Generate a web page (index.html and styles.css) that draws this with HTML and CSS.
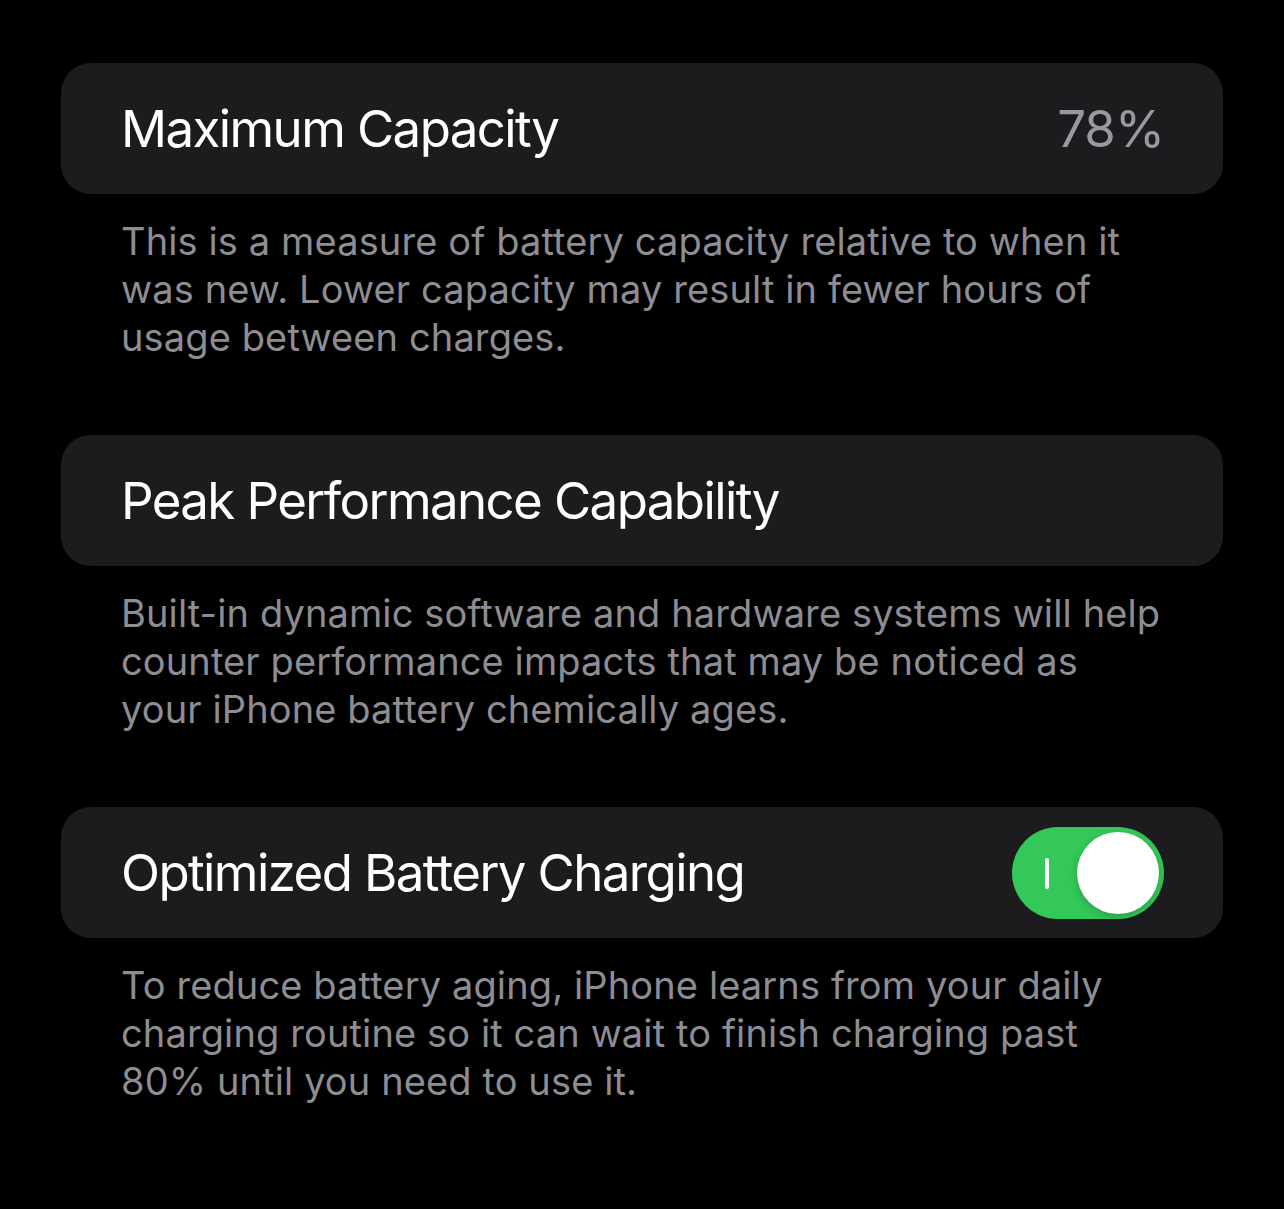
FILE: index.html
```html
<!DOCTYPE html>
<html>
<head>
<meta charset="utf-8">
<link rel="stylesheet" href="styles.css">
</head>
<body>
<main class="page">
  <section class="group">
    <div class="card">
      <span class="title">Maximum Capacity</span>
      <span class="value">78%</span>
    </div>
    <p class="footer">This is a measure of battery capacity relative to when it was new. Lower capacity may result in fewer hours of usage between charges.</p>
  </section>
  <section class="group">
    <div class="card">
      <span class="title">Peak Performance Capability</span>
    </div>
    <p class="footer">Built-in dynamic software and hardware systems will help counter performance impacts that may be noticed as your iPhone battery chemically ages.</p>
  </section>
  <section class="group">
    <div class="card">
      <span class="title">Optimized Battery Charging</span>
      <span class="toggle"><span class="on-mark"></span><span class="knob"></span></span>
    </div>
    <p class="footer">To reduce battery aging, iPhone learns from your daily charging routine so it can wait to finish charging past 80% until you need to use it.</p>
  </section>
</main>
</body>
</html>
```
FILE: styles.css
```css
html, body {
  margin: 0;
  padding: 0;
  background: #000;
}
body {
  font-family: Inter, "Noto Sans", sans-serif;
  -webkit-font-smoothing: antialiased;
}
.page {
  padding: 63px 61px 0 61px;
  display: flex;
  flex-direction: column;
}
.group {
  display: flex;
  flex-direction: column;
}
.card {
  height: 131px;
  background: #1c1c1e;
  border-radius: 30px;
  display: flex;
  align-items: center;
  justify-content: space-between;
  padding: 0 59px 0 60px;
  box-sizing: border-box;
}
.title {
  color: #fff;
  font-size: 51px;
  letter-spacing: -1.6px;
}
.value {
  color: #98989f;
  font-size: 51px;
  letter-spacing: -1px;
}
.footer {
  margin: 23px 0 74px 0;
  padding: 0 60px 0 60px;
  color: #8d8d93;
  font-size: 38px;
  line-height: 48px;
  letter-spacing: 0.12px;
}
.toggle {
  position: relative;
  width: 152px;
  height: 92px;
  border-radius: 46px;
  background: #34c759;
  display: block;
}
.on-mark {
  position: absolute;
  left: 33px;
  top: 31px;
  width: 4px;
  height: 31px;
  background: #fff;
  border-radius: 2px;
}
.knob {
  position: absolute;
  right: 5px;
  top: 5px;
  width: 82px;
  height: 82px;
  border-radius: 50%;
  background: #fff;
  box-shadow: 0 3px 8px rgba(0,0,0,0.2);
}
```
